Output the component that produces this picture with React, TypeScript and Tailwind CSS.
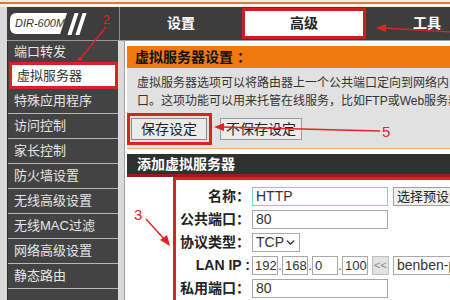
import { ChevronDown } from 'lucide-react';

const menu = [
  '端口转发',
  '虚拟服务器',
  '特殊应用程序',
  '访问控制',
  '家长控制',
  '防火墙设置',
  '无线高级设置',
  '无线MAC过滤',
  '网络高级设置',
  '静态路由',
];

const Sidebar: React.FC = () => {
  return (
    <nav className="flex w-[111px] flex-col border-l border-[#2a2a2a] bg-[#434343] text-[13px] text-[#e6e6e6]">
      {menu.map((item, i) => {
        if (i === 0) {
          return (
            <div key={item} className="flex h-[21px] items-center pl-[6px]">
              {item}
            </div>
          );
        }
        if (i === 1) {
          return (
            <div
              key={item}
              className="ml-[1px] flex h-[27px] items-center border-[3px] border-[#d42424] bg-white pl-[5px] text-[#333]"
            >
              {item}
            </div>
          );
        }
        return (
          <div key={item} className="flex h-[25px] items-center border-b border-[#b8b8b8] pl-[6px]">
            {item}
          </div>
        );
      })}
    </nav>
  );
};

const Field: React.FC<{ label: string; children: React.ReactNode }> = ({ label, children }) => (
  <div className="flex h-[19px] items-center">
    <div className="w-[74px] shrink-0 text-right text-[14px] font-bold whitespace-nowrap text-[#222]">{label}</div>
    <div className="ml-[2px] flex h-full items-center">{children}</div>
  </div>
);

const Input: React.FC<{ value: string; w: string; focus?: boolean }> = ({ value, w, focus }) => (
  <div
    className={`${w} flex h-full items-center border px-[3px] text-[14px] whitespace-nowrap text-[#333] ${
      focus ? 'border-[#7fcfe0]' : 'border-[#a8a8a8]'
    }`}
  >
    {value}
  </div>
);

const IpBox: React.FC<{ value: string }> = ({ value }) => (
  <div className="flex h-full w-[26px] items-center border border-[#a8a8a8] px-[2px] text-[13px] text-[#333]">
    {value}
  </div>
);

const Dot: React.FC = () => <span className="flex h-full w-[4px] items-end justify-center text-[12px] text-[#333]">.</span>;

export default function App() {
  return (
    <div className="relative h-[300px] w-[450px] overflow-hidden bg-white font-['Liberation_Sans','Noto_Sans_CJK_SC',sans-serif]">
      {/* top strips */}
      <div className="h-[2px] bg-[#f1ece6]" />
      <div className="h-[2px] bg-[#d9793a]" />
      <div className="h-[3px] bg-[#f6f2ee]" />

      <div className="flex">
        <div className="w-[7px] shrink-0 bg-[#dadada]" />
        <div className="flex flex-1 flex-col">
          {/* header */}
          <header className="flex h-[33px] bg-[#3d3d3d]">
            <div className="flex w-[113px] shrink-0 items-center border-r border-[#8a8a8a] pl-[3px]">
              <div className="flex h-[21px] w-[57px] items-center rounded-l-[6px] bg-white pl-[5px] text-[11px] text-[#333] italic [clip-path:polygon(0_0,100%_0,88%_100%,0_100%)]">
                DIR-600M
              </div>
              <div className="ml-[4px] h-[22px] w-[4px] -skew-x-[18deg] bg-white" />
              <div className="ml-[4px] h-[22px] w-[4px] -skew-x-[18deg] bg-white" />
            </div>
            <div className="flex w-[122px] shrink-0 items-center justify-center text-[14px] font-bold text-white">
              设置
            </div>
            <div className="mt-[1px] flex h-[31px] w-[124px] shrink-0 items-center justify-center border-[3px] border-[#cc1f1f] bg-white text-[14px] font-bold text-[#222]">
              高级
            </div>
            <div className="flex w-[122px] shrink-0 items-center justify-center text-[14px] font-bold text-white">
              工具
            </div>
          </header>
          <div className="h-[1px] bg-[#9a9a9a]" />

          {/* body */}
          <div className="flex h-[259px]">
            <Sidebar />
            <div className="w-[7px] shrink-0 border-r border-[#a0a0a0] bg-[#dadada]" />
            <main className="ml-[2px] flex flex-1 flex-col overflow-hidden">
              <div className="mt-[5px] flex h-[22px] items-center bg-[#f07a10] pl-[8px] text-[14px] font-bold whitespace-nowrap text-[#111]">
                虚拟服务器设置 ：
              </div>
              <div className="border-b border-[#f0b27c] bg-[#e1e1e1] pb-[3px]">
                <div className="pt-[6px] pl-[10px] text-[12px] leading-[18px] whitespace-nowrap text-[#333]">
                  <div>虚拟服务器选项可以将路由器上一个公共端口定向到网络内</div>
                  <div>口。这项功能可以用来托管在线服务，比如FTP或Web服务器</div>
                </div>
                <div className="mt-[3px] flex items-center">
                  <div className="flex h-[32px] w-[85px] items-start border-[3px] border-[#d42424] pt-[2px] pl-[1px]">
                    <div className="flex h-[22px] w-[76px] items-center justify-center border border-[#8a8a8a] bg-[#ebebeb] text-[14px] text-[#222]">
                      保存设定
                    </div>
                  </div>
                  <div className="ml-[8px] flex h-[22px] w-[82px] items-center justify-center border border-[#9a9a9a] bg-[#ebebeb] text-[14px] text-[#222]">
                    不保存设定
                  </div>
                </div>
              </div>
              <div className="mt-[5px] flex h-[23px] items-center border-b-[3px] border-[#9c1c1c] bg-[#303030] pl-[10px] text-[14px] font-bold text-white">
                添加虚拟服务器
              </div>
              <div className="flex flex-1">
                <div className="w-[46px] shrink-0" />
                <div className="flex flex-1 flex-col gap-[4px] border-t-[3px] border-l-[3px] border-[#d8232a] pt-[7px]">
                  <Field label="名称：">
                    <Input value="HTTP" w="w-[136px]" focus />
                    <div className="ml-[5px] flex h-full items-center border border-[#a0a0a0] bg-[#f0f0f0] px-[3px] text-[13px] whitespace-nowrap text-[#222]">
                      选择预设的应用程序
                    </div>
                  </Field>
                  <Field label="公共端口：">
                    <Input value="80" w="w-[136px]" />
                  </Field>
                  <Field label="协议类型：">
                    <div className="flex h-full w-[48px] items-center justify-between border border-[#a8a8a8] pr-[2px] pl-[3px] text-[14px] text-[#333]">
                      TCP
                      <ChevronDown size={15} strokeWidth={2.5} className="text-[#222]" />
                    </div>
                  </Field>
                  <Field label="LAN IP :">
                    <IpBox value="192" />
                    <Dot />
                    <IpBox value="168" />
                    <Dot />
                    <IpBox value="0" />
                    <Dot />
                    <IpBox value="100" />
                    <div className="ml-[4px] flex h-full w-[17px] items-center justify-center border border-[#bdbdbd] bg-[#e2e2e2] text-[11px] text-[#888]">
                      &lt;&lt;
                    </div>
                    <div className="ml-[4px] flex h-full w-[80px] items-center border border-[#a8a8a8] px-[3px] text-[14px] whitespace-nowrap text-[#333]">
                      benben-pc
                    </div>
                  </Field>
                  <Field label="私用端口：">
                    <Input value="80" w="w-[136px]" />
                  </Field>
                </div>
              </div>
            </main>
          </div>
        </div>
      </div>

      {/* annotations */}
      <svg className="pointer-events-none absolute inset-0" width="450" height="300" viewBox="0 0 450 300">
        <g stroke="#e02424" strokeWidth="1.4" fill="#e02424">
          <line x1="452" y1="32" x2="384" y2="28" />
          <polygon points="376,28 386,24 386,32" stroke="none" />
          <line x1="106" y1="27" x2="81" y2="58" />
          <circle cx="80" cy="59" r="2" stroke="none" />
          <line x1="380" y1="131" x2="222" y2="127" />
          <polygon points="214,127 224,123 224,131" stroke="none" />
          <line x1="146" y1="219" x2="165" y2="240" />
          <polygon points="170,246 160,240 167,235" stroke="none" />
        </g>
      </svg>
      <span className="absolute top-[14px] left-[103px] text-[12px] leading-none text-[#e02424]">2</span>
      <span className="absolute top-[124px] left-[382px] text-[15px] leading-none text-[#e02424]">5</span>
      <span className="absolute top-[207px] left-[134px] text-[15px] leading-none text-[#e02424]">3</span>
    </div>
  );
}
